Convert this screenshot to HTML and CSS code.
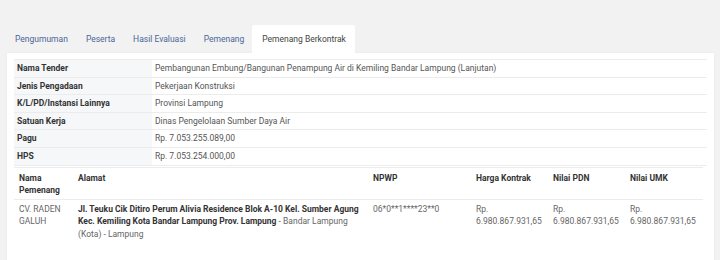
FILE: index.html
```html
<!DOCTYPE html>
<html lang="id">
<head>
<meta charset="utf-8">
<link rel="stylesheet" href="styles.css">
</head>
<body>
<div class="page">
  <ul class="tabs">
    <li class="tab">Pengumuman</li>
    <li class="tab">Peserta</li>
    <li class="tab">Hasil Evaluasi</li>
    <li class="tab">Pemenang</li>
    <li class="tab active">Pemenang Berkontrak</li>
  </ul>
  <div class="card">
    <table class="info">
      <tr><th>Nama Tender</th><td>Pembangunan Embung/Bangunan Penampung Air di Kemiling Bandar Lampung (Lanjutan)</td></tr>
      <tr><th>Jenis Pengadaan</th><td>Pekerjaan Konstruksi</td></tr>
      <tr><th>K/L/PD/Instansi Lainnya</th><td>Provinsi Lampung</td></tr>
      <tr><th>Satuan Kerja</th><td>Dinas Pengelolaan Sumber Daya Air</td></tr>
      <tr><th>Pagu</th><td>Rp. 7.053.255.089,00</td></tr>
      <tr><th>HPS</th><td>Rp. 7.053.254.000,00</td></tr>
    </table>
    <table class="winners">
      <colgroup>
        <col class="c1"><col class="c2"><col class="c3"><col class="c4"><col class="c5"><col class="c6">
      </colgroup>
      <thead>
        <tr><th>Nama Pemenang</th><th>Alamat</th><th>NPWP</th><th>Harga Kontrak</th><th>Nilai PDN</th><th>Nilai UMK</th></tr>
      </thead>
      <tbody>
        <tr>
          <td>CV. RADEN GALUH</td>
          <td><b>Jl. Teuku Cik Ditiro Perum Alivia Residence Blok A-10 Kel. Sumber Agung Kec. Kemiling Kota Bandar Lampung Prov. Lampung</b> - Bandar Lampung (Kota) - Lampung</td>
          <td>06*0**1****23**0</td>
          <td>Rp. 6.980.867.931,65</td>
          <td>Rp. 6.980.867.931,65</td>
          <td>Rp. 6.980.867.931,65</td>
        </tr>
      </tbody>
    </table>
  </div>
</div>
</body>
</html>
```

FILE: styles.css
```css
html, body {
  margin: 0;
  padding: 0;
  background: #f2f2f2;
  font-family: Roboto, "Liberation Sans", sans-serif;
  font-size: 8.5px;
  color: #555;
}
.page {
  padding-top: 25px;
  height: 235px;
  overflow: hidden;
}
.tabs {
  list-style: none;
  margin: 0 0 0 5px;
  padding: 0;
  display: flex;
}
.tab {
  padding: 0 9px 0 10px;
  margin-right: -1px;
  height: 28px;
  line-height: 28px;
  color: #4a6796;
}
.tab.active {
  background: #fff;
  color: #444;
  border-radius: 2px 2px 0 0;
}
.card {
  margin: 0 6px 0 7px;
  background: #fff;
  padding: 6px 7px 0 7px;
  min-height: 220px;
  box-shadow: 0 0 2px rgba(0,0,0,0.06);
}
.info {
  width: 100%;
  border-collapse: collapse;
  border-top: 1px solid #ececec;
}
.info th, .info td {
  text-align: left;
  padding: 2px 3px;
  line-height: 12.6px;
  border-bottom: 1px solid #ececec;
  vertical-align: top;
}
.info th {
  width: 132px;
  background: #f5f7f9;
  color: #333;
  font-weight: bold;
}
.info td {
  color: #555;
}
.winners {
  width: 689px;
  table-layout: fixed;
  border-collapse: collapse;
  margin-top: 1px;
  border-top: 1px solid #ececec;
}
.c1 { width: 59px; }
.c2 { width: 295px; }
.c3 { width: 103px; }
.c4 { width: 77px; }
.c5 { width: 77px; }
.c6 { width: 78px; }
.winners th, .winners td {
  text-align: left;
  vertical-align: top;
  padding: 4px 5px;
  line-height: 12.6px;
}
.winners th {
  color: #333;
  font-weight: bold;
  border-bottom: 1px solid #ececec;
  padding-bottom: 2px;
}
.winners td {
  color: #666;
  padding-top: 3px;
}
.winners td b {
  color: #333;
}
```
